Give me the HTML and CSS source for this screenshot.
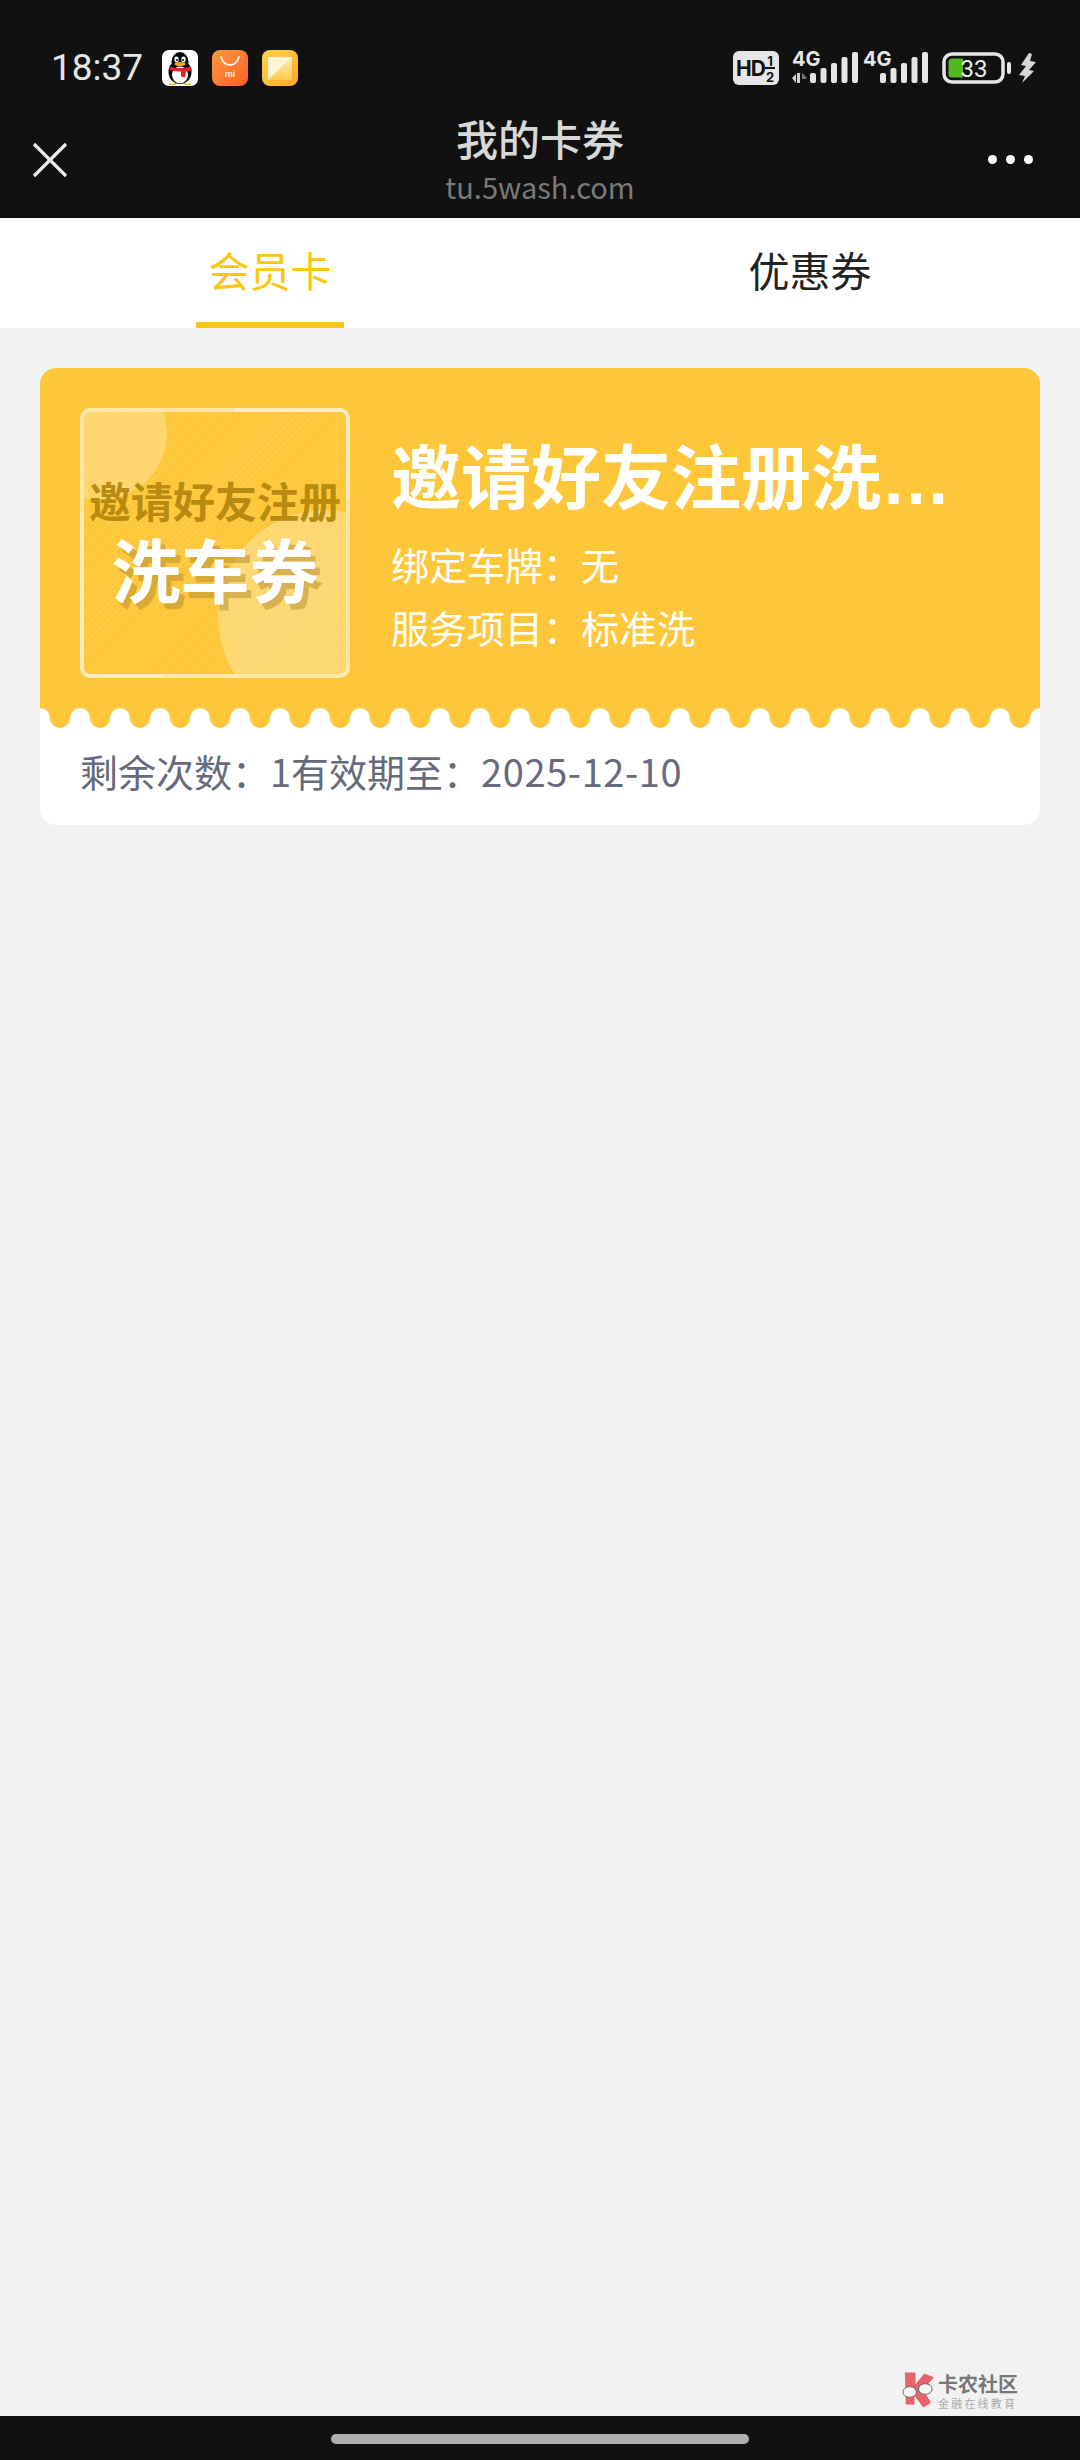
FILE: index.html
```html
<!DOCTYPE html>
<html lang="zh-CN">
<head>
<meta charset="utf-8">
<title>我的卡券</title>
<link rel="stylesheet" href="styles.css">
</head>
<body>
<div class="page">
  <header class="top">
    <div class="status">
      <div class="status-left">
        <span class="time">18:37</span>
        <svg class="app" viewBox="0 0 36 36"><rect width="36" height="36" rx="7" fill="#fff"/><ellipse cx="18" cy="22" rx="11.500" ry="12" fill="#0b0b0b"/><ellipse cx="18" cy="12" rx="8.500" ry="10" fill="#0b0b0b"/><ellipse cx="18" cy="25" rx="8" ry="8.500" fill="#fff"/><ellipse cx="14.500" cy="9.500" rx="2.200" ry="3" fill="#fff"/><ellipse cx="21.500" cy="9.500" rx="2.200" ry="3" fill="#fff"/><circle cx="15" cy="10" r="1" fill="#000"/><circle cx="21" cy="10" r="1" fill="#000"/><ellipse cx="18" cy="14" rx="5.500" ry="2" fill="#f5a623"/><path d="M7 16.500c7 2 15 2 22 0l1 4-6 1-1 6-4-1v-5c-4 0-8-.5-11-1.500z" fill="#e8202c"/><path d="M7 33.500h7v1.500H7zM22 33.500h7v1.500h-7z" fill="#f0c020"/></svg>
        <svg class="app" viewBox="0 0 36 36"><defs><linearGradient id="mi" x1="0" y1="0" x2="1" y2="1"><stop offset="0" stop-color="#ff9a3d"/><stop offset="1" stop-color="#fa5f2b"/></linearGradient></defs><rect width="36" height="36" rx="8" fill="url(#mi)"/><path d="M9 7c1.500 5 5 8 9 8s7.500-3 9-8" fill="none" stroke="#fff" stroke-width="1.800" stroke-linecap="round" opacity=".9"/><text x="18" y="27" class="mi-text">mi</text></svg>
        <svg class="app" viewBox="0 0 36 36"><defs><linearGradient id="gal" x1="0" y1="0" x2="1" y2="1"><stop offset="0" stop-color="#ffd44f"/><stop offset="1" stop-color="#ffa726"/></linearGradient><linearGradient id="gal2" x1="0" y1="0" x2="0" y2="1"><stop offset="0" stop-color="#ffeeb8"/><stop offset="1" stop-color="#ffc94f"/></linearGradient></defs><rect width="36" height="36" rx="8" fill="url(#gal)"/><path d="M30 7v23H6z" fill="url(#gal2)"/><path d="M6 7h24L6 30z" fill="#fff4d6"/></svg>
      </div>
      <div class="status-right">
        <svg class="hd" viewBox="0 0 46 34"><rect width="46" height="34" rx="6" fill="#e6e6e6"/><text x="3" y="25" class="hd-main">HD</text><text x="37" y="15" class="hd-sub">1</text><text x="37" y="31" class="hd-sub">2</text><rect x="32" y="16" width="10" height="2" fill="#111"/></svg>
        <svg class="signal first" viewBox="0 0 66 33"><text x="0" y="15" class="net">4G</text><path d="M0 27l4-4v9zM5 22h3v10H5z" fill="#d0d0d0"/><path d="M10 22l5 5-2 1h-3z" fill="#777"/><rect x="18" y="22" width="6" height="10" rx="2" fill="#e6e6e6"/><rect x="28.500" y="17" width="6" height="15" rx="2" fill="#e6e6e6"/><rect x="39" y="12" width="6" height="20" rx="2" fill="#e6e6e6"/><rect x="49.500" y="6" width="6" height="26" rx="2" fill="#e6e6e6"/><rect x="60" y="1" width="6" height="31" rx="2" fill="#e6e6e6"/></svg>
        <svg class="signal second" viewBox="0 0 65 33"><text x="0" y="15" class="net">4G</text><rect x="17" y="22" width="6" height="10" rx="2" fill="#e6e6e6"/><rect x="27.500" y="17" width="6" height="15" rx="2" fill="#e6e6e6"/><rect x="38" y="12" width="6" height="20" rx="2" fill="#e6e6e6"/><rect x="48.500" y="6" width="6" height="26" rx="2" fill="#e6e6e6"/><rect x="59" y="1" width="6" height="31" rx="2" fill="#e6e6e6"/></svg>
        <svg class="battery" viewBox="0 0 70 32"><rect x="2" y="2" width="59" height="28" rx="8" fill="none" stroke="#e6e6e6" stroke-width="3.500"/><path d="M10 6.500h11v19H10a3.500 3.500 0 0 1-3.500-3.500V10A3.500 3.500 0 0 1 10 6.500z" fill="#52b81f"/><rect x="65" y="10" width="4" height="12" rx="2" fill="#e6e6e6"/><text x="32" y="25" class="batt">33</text></svg>
        <svg class="bolt" viewBox="0 0 17 30"><path d="M10 0L2 12l5 1-7 9 6 1-3 7 12-12-5-1 7-8-6-1 2-7z" fill="#d8d8d8"/></svg>
      </div>
    </div>
    <nav class="navbar">
      <div class="nav-side"><svg class="close" viewBox="0 0 36 36"><path d="M2 2l32 32M34 2L2 34" stroke="#eee" stroke-width="3.200" fill="none"/></svg></div>
      <div class="nav-title">
        <div class="title">我的卡券</div>
        <div class="url">tu.5wash.com</div>
      </div>
      <div class="nav-side end"><div class="dots"><i></i><i></i><i></i></div></div>
    </nav>
  </header>

  <div class="tabs">
    <div class="tab active"><span>会员卡</span></div>
    <div class="tab"><span>优惠券</span></div>
  </div>

  <main class="content">
    <section class="card">
      <div class="card-top">
        <div class="thumb">
          <div class="thumb-line">邀请好友注册</div>
          <div class="thumb-big">洗车券</div>
        </div>
        <div class="info">
          <div class="info-title">邀请好友注册洗车券</div>
          <div class="info-row">绑定车牌：无</div>
          <div class="info-row">服务项目：标准洗</div>
        </div>
      </div>
      <svg class="scallop" width="1000" height="20" viewBox="0 0 1000 20"><defs><pattern id="wave" width="40" height="20" patternUnits="userSpaceOnUse"><path d="M0 0A10 10 0 0 1 10 10A10 10 0 0 0 30 10A10 10 0 0 1 40 0Z" fill="#fec73a"/></pattern></defs><rect width="1000" height="20" fill="url(#wave)"/></svg>
      <div class="card-foot">剩余次数：1有效期至：<span class="date">2025-12-10</span></div>
    </section>
  </main>

  <div class="mark">
    <svg class="mark-logo" viewBox="0 0 36 36"><path d="M5 0h11v12l9-11 10 4-11 13 8 13-8 5-9-12v9H6z" fill="#e8636b"/><ellipse cx="10" cy="20" rx="7" ry="5.500" fill="#f4f4f4" stroke="#666" stroke-width="1"/><ellipse cx="26" cy="17" rx="7" ry="5.500" fill="#f4f4f4" stroke="#666" stroke-width="1"/></svg>
    <div class="mark-text">
      <div class="mark-name">卡农社区</div>
      <div class="mark-sub">金融在线教育</div>
    </div>
  </div>

  <footer class="homebar"><div class="indicator"></div></footer>
</div>
</body>
</html>
```
FILE: styles.css
```css
* { box-sizing: border-box; }
html, body { margin: 0; padding: 0; }
body {
  width: 1080px;
  height: 2460px;
  overflow: hidden;
  background: #f2f2f2;
  font-family: "Noto Sans CJK SC", "Noto Sans", sans-serif;
}
.page {
  position: relative;
  display: flex;
  flex-direction: column;
  height: 2460px;
}

/* dark header */
.top { height: 218px; background: #111; flex: none; }
.status {
  height: 118px;
  padding: 50px 44px 0 51px;
  display: flex;
  justify-content: space-between;
  align-items: flex-start;
}
.status-left { display: flex; align-items: center; height: 36px; }
.time {
  font-family: Roboto, sans-serif;
  font-size: 37px;
  font-weight: 400;
  color: #e6e6e6;
  line-height: 36px;
  width: 111px;
}
.app { width: 36px; height: 36px; margin-right: 14px; display: block; }
.mi-text { font: 700 9px Roboto, sans-serif; fill: #ffe2cc; text-anchor: middle; }
.status-right { display: flex; align-items: flex-start; }
.hd { width: 46px; height: 34px; margin-top: 1px; margin-right: 13px; display: block; }
.hd-main { font: 700 21px Inter, sans-serif; fill: #111; letter-spacing: -1px; }
.hd-sub { font: 700 13px Inter, sans-serif; fill: #111; text-anchor: middle; }
.signal { height: 33px; margin-top: 1px; display: block; }
.signal.first { width: 66px; }
.signal.second { width: 65px; margin-left: 5px; }
.net { font: 700 20px Inter, sans-serif; fill: #e6e6e6; }
.battery { width: 70px; height: 32px; margin-left: 14px; margin-top: 2px; display: block; }
.batt { font: 400 24px Roboto, sans-serif; fill: #eee; text-anchor: middle; }
.bolt { width: 17px; height: 30px; margin-left: 7px; margin-top: 3px; display: block; }

.navbar {
  height: 100px;
  display: grid;
  grid-template-columns: 1fr auto 1fr;
  align-items: start;
  padding: 0 47px 0 32px;
}
.nav-side { display: flex; }
.nav-side.end { justify-content: flex-end; }
.close { width: 36px; height: 36px; margin-top: 24px; display: block; }
.nav-title { text-align: center; margin: -5px 0 0 15px; }
.title { font-size: 42px; font-weight: 500; line-height: 50px; color: #d8d8d8; }
.url { font-size: 29px; line-height: 40px; color: #7a7a7a; margin-top: 3px; }
.dots { display: flex; gap: 9px; margin-top: 37px; }
.dots i { width: 9px; height: 9px; border-radius: 50%; background: #fff; display: block; flex: none; }

/* tabs */
.tabs { height: 110px; background: #fff; display: flex; flex: none; }
.tab {
  flex: 1;
  display: flex;
  justify-content: center;
  font-size: 41px;
  color: #222;
}
.tab span {
  display: block;
  width: 148px;
  height: 110px;
  line-height: 102px;
  text-align: center;
}
.tab.active { color: #f9c80e; }
.tab.active span { border-bottom: 6px solid #f9c80e; }

/* card */
.content { flex: 1; padding: 40px 40px 0; }
.card {
  background: #fff;
  border-radius: 16px;
  overflow: hidden;
  height: 457px;
}
.card-top {
  height: 340px;
  background: #fec73a;
  padding: 40px 40px 0;
  display: flex;
  align-items: flex-start;
}
.thumb {
  width: 270px;
  height: 270px;
  flex: none;
  border: 4px solid rgba(255, 255, 255, .55);
  border-radius: 10px;
  margin-right: 41px;
  text-align: center;
  padding-top: 60px;
  background:
    radial-gradient(circle 67px at 16px 21px, rgba(255, 255, 255, .25) 99.5%, transparent 100%),
    radial-gradient(circle 107px at 241px 205px, rgba(255, 255, 255, .28) 99.5%, transparent 100%),
    repeating-linear-gradient(135deg, rgba(255, 255, 255, .1) 0 1px, transparent 1px 4px);
}
.thumb-line {
  font-size: 42px;
  font-weight: 700;
  line-height: 56px;
  color: #b98a10;
  white-space: nowrap;
  margin: 0 -4px;
}
.thumb-big {
  font-size: 69px;
  font-weight: 700;
  line-height: 84px;
  margin-top: -2px;
  color: #fff;
  text-shadow: 5px 6px 0 rgba(170, 130, 40, .45);
  white-space: nowrap;
}
.info { flex: 1; min-width: 0; color: #fff; font-family: "Liberation Sans", "Noto Sans CJK SC", sans-serif; padding-top: 30px; }
.info-title {
  font-size: 70px;
  font-weight: 700;
  line-height: 84px;
  white-space: nowrap;
  overflow: hidden;
  text-overflow: ellipsis;
}
.info-row {
  font-family: "Noto Sans CJK SC", sans-serif;
  font-size: 38px;
  font-weight: 400;
  line-height: 63px;
  white-space: nowrap;
}
.info-title + .info-row { margin-top: 10px; }
.scallop { display: block; }
.card-foot {
  padding: 0 40px;
  font-size: 38px;
  line-height: 56px;
  margin-top: 15px;
  color: #666a7a;
  white-space: nowrap;
}
.date { letter-spacing: .6px; }

/* watermark */
.mark {
  position: absolute;
  left: 900px;
  top: 2372px;
  display: flex;
  gap: 3px;
  align-items: flex-start;
}
.mark-logo { width: 35px; height: 36px; display: block; }
.mark-text { padding-top: 2px; }
.mark-name { font-size: 20px; font-weight: 700; line-height: 20px; color: #777; }
.mark-sub { font-size: 11px; line-height: 14px; color: #aaa; letter-spacing: 2.200px; margin-top: 2px; white-space: nowrap; }

/* bottom bar */
.homebar {
  height: 44px;
  background: #111;
  flex: none;
  display: flex;
  justify-content: center;
  padding-top: 18px;
}
.indicator { width: 418px; height: 10px; border-radius: 5px; background: #b0b0b0; }
```
